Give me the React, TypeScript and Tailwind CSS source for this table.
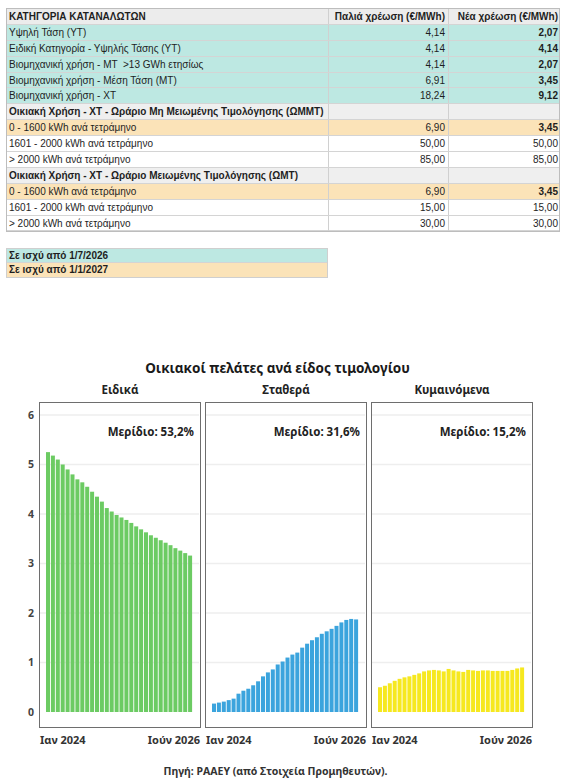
import React from "react";

type Row = {
  label: string;
  old?: string;
  nu?: string;
  tone: "head" | "teal" | "sand" | "white" | "section";
};

const rows: Row[] = [
  { label: "ΚΑΤΗΓΟΡΙΑ ΚΑΤΑΝΑΛΩΤΩΝ", old: "Παλιά χρέωση (€/MWh)", nu: "Νέα χρέωση (€/MWh)", tone: "head" },
  { label: "Υψηλή Τάση (ΥΤ)", old: "4,14", nu: "2,07", tone: "teal" },
  { label: "Ειδική Κατηγορία - Υψηλής Τάσης (ΥΤ)", old: "4,14", nu: "4,14", tone: "teal" },
  { label: "Βιομηχανική χρήση - ΜΤ  >13 GWh ετησίως", old: "4,14", nu: "2,07", tone: "teal" },
  { label: "Βιομηχανική χρήση - Μέση Τάση (ΜΤ)", old: "6,91", nu: "3,45", tone: "teal" },
  { label: "Βιομηχανική χρήση - ΧΤ", old: "18,24", nu: "9,12", tone: "teal" },
  { label: "Οικιακή Χρήση - ΧΤ - Ωράριο Μη Μειωμένης Τιμολόγησης (ΩΜΜΤ)", tone: "section" },
  { label: "0 - 1600 kWh ανά τετράμηνο", old: "6,90", nu: "3,45", tone: "sand" },
  { label: "1601 - 2000 kWh ανά τετράμηνο", old: "50,00", nu: "50,00", tone: "white" },
  { label: "> 2000 kWh ανά τετράμηνο", old: "85,00", nu: "85,00", tone: "white" },
  { label: "Οικιακή Χρήση - ΧΤ - Ωράριο Μειωμένης Τιμολόγησης (ΩΜΤ)", tone: "section" },
  { label: "0 - 1600 kWh ανά τετράμηνο", old: "6,90", nu: "3,45", tone: "sand" },
  { label: "1601 - 2000 kWh ανά τετράμηνο", old: "15,00", nu: "15,00", tone: "white" },
  { label: "> 2000 kWh ανά τετράμηνο", old: "30,00", nu: "30,00", tone: "white" },
];

const toneBg = {
  head: "bg-[#ececec]",
  teal: "bg-[#bde8e2]",
  sand: "bg-[#fbe3b8]",
  white: "bg-white",
  section: "bg-[#efefef]",
};

const green = [5.25, 5.18, 5.1, 5.0, 4.9, 4.8, 4.7, 4.64, 4.55, 4.45, 4.35, 4.25, 4.12, 4.05, 3.98, 3.93, 3.88, 3.82, 3.75, 3.69, 3.63, 3.57, 3.52, 3.47, 3.42, 3.37, 3.31, 3.26, 3.21, 3.16];
const blue = [0.17, 0.19, 0.21, 0.24, 0.27, 0.37, 0.43, 0.47, 0.54, 0.62, 0.72, 0.8, 0.86, 0.96, 1.02, 1.1, 1.16, 1.2, 1.3, 1.38, 1.45, 1.51, 1.58, 1.63, 1.68, 1.74, 1.81, 1.86, 1.88, 1.87];
const yellow = [0.5, 0.53, 0.58, 0.63, 0.67, 0.7, 0.72, 0.75, 0.78, 0.82, 0.84, 0.85, 0.84, 0.82, 0.87, 0.84, 0.82, 0.81, 0.85, 0.84, 0.83, 0.84, 0.84, 0.83, 0.83, 0.83, 0.83, 0.85, 0.88, 0.9];

const UNIT = 49.5;
const ZERO = 309;

function TableRow({ row }: { row: Row }) {
  const bold = row.tone === "head" || row.tone === "section";
  const boldNew = row.tone === "teal" || row.tone === "sand" || row.tone === "head";
  return (
    <div className={`grid grid-cols-[322px_120px_112px] h-[15.9px] leading-[15px] border-b border-[#d4d4d4] ${toneBg[row.tone]}`}>
      <div className={`pl-[2px] border-r border-[#d0d0d0] whitespace-pre ${bold ? "font-bold" : ""}`}>{row.label}</div>
      <div className={`pr-[3px] text-right border-r border-[#d0d0d0] whitespace-nowrap ${row.tone === "head" ? "font-bold" : ""}`}>{row.old}</div>
      <div className={`pr-[3px] text-right whitespace-nowrap ${boldNew ? "font-bold" : ""}`}>{row.nu}</div>
    </div>
  );
}

function Panel({ title, share, data, color }: { title: string; share: string; data: number[]; color: string }) {
  const step = 147 / data.length;
  return (
    <div className="flex flex-col w-[162px]">
      <div className="h-[24px] text-center text-[11.5px] font-bold text-[#222] leading-[24px]">{title}</div>
      <div className="relative h-[326px] border-[1.5px] border-[#6e6e6e] bg-white">
        <svg width="159" height="323" className="block">
          {[1, 2, 3, 4, 5, 6].map((k) => (
            <line key={k} x1="0" x2="159" y1={ZERO - k * UNIT} y2={ZERO - k * UNIT} stroke="#eeeeee" strokeWidth="1.5" />
          ))}
          {data.map((v, i) => (
            <rect key={i} x={6 + i * step} y={ZERO - v * UNIT} width={step - 0.9} height={v * UNIT} fill={color} />
          ))}
        </svg>
        <div className="absolute right-[6px] top-[20px] text-[11.5px] font-bold text-[#222]">Μερίδιο: {share}</div>
      </div>
      <div className="flex justify-between px-[1px] pt-[4px] text-[11px] font-bold text-[#333] whitespace-nowrap">
        <span>Ιαν 2024</span>
        <span>Ιούν 2026</span>
      </div>
    </div>
  );
}

export default function App() {
  return (
    <div className="w-[583px] h-[783px] bg-white font-['Liberation_Sans',sans-serif] overflow-hidden">
      {/* Tariff table */}
      <div className="pt-[8px] pl-[6px]">
        <div className="w-[554px] border border-[#bdbdbd] text-[10px] text-[#1e1e1e]">
          {rows.map((r, i) => (
            <TableRow key={i} row={r} />
          ))}
        </div>

        <div className="mt-[16px] w-[322px] border border-[#cfcfcf] text-[10px] font-bold text-[#1e1e1e]">
          <div className="h-[14px] leading-[14px] pl-[2px] bg-[#bde8e2] border-b border-[#d4d4d4]">Σε ισχύ από 1/7/2026</div>
          <div className="h-[14px] leading-[14px] pl-[2px] bg-[#fbe3b8]">Σε ισχύ από 1/1/2027</div>
        </div>
      </div>

      {/* Chart */}
      <div className="mt-[81px] font-['Noto_Sans',sans-serif]">
        <div className="text-center text-[13.5px] font-bold text-[#1a1a1a] pr-[28px] leading-[18px]">
          Οικιακοί πελάτες ανά είδος τιμολογίου
        </div>
        <div className="flex mt-[1px]">
          <div className="relative w-[39px] mt-[24px] h-[326px]">
            {[6, 5, 4, 3, 2, 1, 0].map((k) => (
              <span
                key={k}
                className="absolute right-[5px] text-[10.5px] font-bold text-[#444] leading-none"
                style={{ top: 1.5 + ZERO - k * UNIT - 6 }}
              >
                {k}
              </span>
            ))}
          </div>
          <div className="flex gap-[4px]">
            <Panel title="Ειδικά" share="53,2%" data={green} color="#6ccb63" />
            <Panel title="Σταθερά" share="31,6%" data={blue} color="#3ba4dd" />
            <Panel title="Κυμαινόμενα" share="15,2%" data={yellow} color="#f6e81f" />
          </div>
        </div>
        <div className="mt-[15px] text-center text-[10.5px] font-bold text-[#333] pr-[32px]">
          Πηγή: ΡΑΑΕΥ (από Στοιχεία Προμηθευτών).
        </div>
      </div>
    </div>
  );
}
